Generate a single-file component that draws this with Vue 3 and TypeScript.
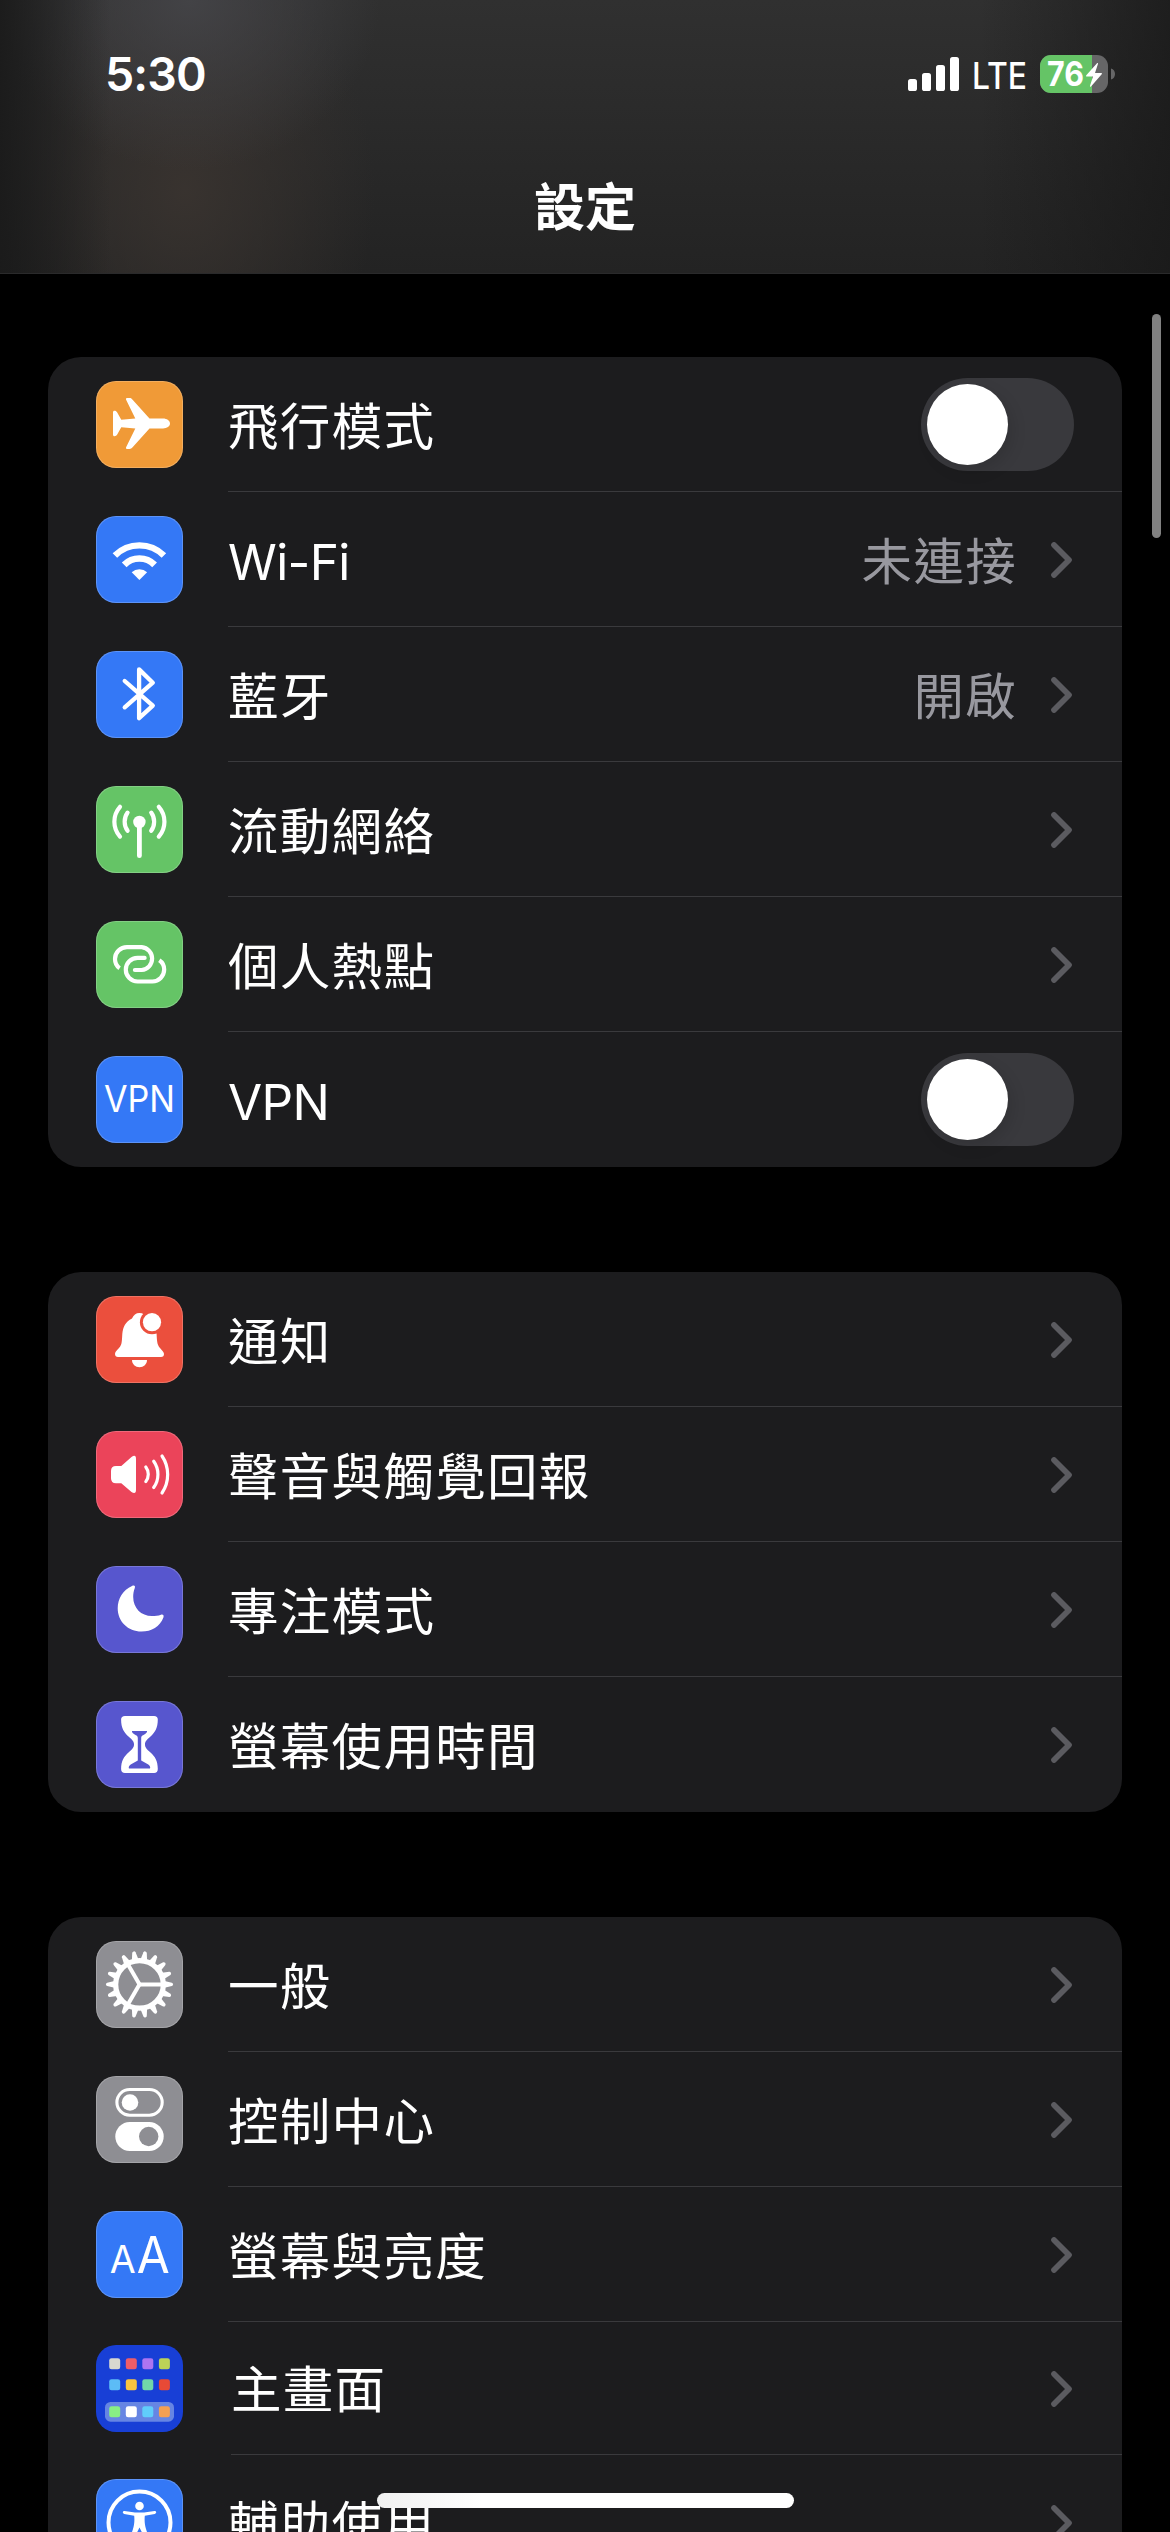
<script setup lang="ts">
type IconName =
  | 'airplane' | 'wifi' | 'bluetooth' | 'cellular' | 'hotspot' | 'vpn'
  | 'bell' | 'speaker' | 'moon' | 'hourglass'
  | 'gear' | 'controls' | 'display' | 'home' | 'accessibility'

interface Row {
  label: string
  icon: IconName
  color: string
  value?: string
  toggle?: boolean
}

const groups: Row[][] = [
  [
    { label: '飛行模式', icon: 'airplane', color: '#f09a37', toggle: true },
    { label: 'Wi-Fi', icon: 'wifi', color: '#3478f6', value: '未連接' },
    { label: '藍牙', icon: 'bluetooth', color: '#3478f6', value: '開啟' },
    { label: '流動網絡', icon: 'cellular', color: '#65c466' },
    { label: '個人熱點', icon: 'hotspot', color: '#65c466' },
    { label: 'VPN', icon: 'vpn', color: '#3478f6', toggle: true },
  ],
  [
    { label: '通知', icon: 'bell', color: '#eb4f3d' },
    { label: '聲音與觸覺回報', icon: 'speaker', color: '#eb445a' },
    { label: '專注模式', icon: 'moon', color: '#5756ce' },
    { label: '螢幕使用時間', icon: 'hourglass', color: '#5756ce' },
  ],
  [
    { label: '一般', icon: 'gear', color: '#8e8e93' },
    { label: '控制中心', icon: 'controls', color: '#8e8e93' },
    { label: '螢幕與亮度', icon: 'display', color: '#3478f6' },
    { label: '主畫面', icon: 'home', color: '#183fd6' },
    { label: '輔助使用', icon: 'accessibility', color: '#3478f6' },
  ],
]

const teeth = Array.from({ length: 18 }, (_, i) => i * 20)

const columns = [13.2, 29.8, 46.3, 62.9]
const homeRows = [
  { y: 13.3, colors: ['#d8d8d0', '#ee5d68', '#ad74f2', '#bcd357'] },
  { y: 34.3, colors: ['#5cbcf6', '#f9c440', '#70d8a9', '#e84a36'] },
  { y: 61.3, colors: ['#88ef84', '#ffffff', '#60cdfb', '#f4a052'] },
]
</script>

<template>
  <div class="screen">
    <header class="header">
      <div class="status">
        <span class="time">5:30</span>
        <div class="indicators">
          <svg class="signal" viewBox="0 0 51 34">
            <rect x="0" y="22" width="9" height="12" rx="2.6" />
            <rect x="14" y="16" width="9" height="18" rx="2.6" />
            <rect x="28" y="8" width="9" height="26" rx="2.6" />
            <rect x="42" y="0" width="9" height="34" rx="2.6" />
          </svg>
          <svg class="carrier" viewBox="0 0 56 38">
            <text x="0" y="34" textLength="55" lengthAdjust="spacingAndGlyphs">LTE</text>
          </svg>
          <svg class="battery" viewBox="0 0 76 38">
            <clipPath id="battery-shape"><rect width="68" height="38" rx="11" /></clipPath>
            <g clip-path="url(#battery-shape)">
              <rect width="68" height="38" fill="#666667" />
              <rect width="52" height="38" fill="#65c466" />
            </g>
            <path d="M71 13.5c2.7.9 4 2.9 4 5.5s-1.300 4.600-4 5.500z" fill="#666667" />
            <text x="7" y="31" class="charge" textLength="37" lengthAdjust="spacingAndGlyphs">76</text>
            <path d="M57 8.200 46.300 20.200c-.5.700-.2 1.300.5 1.300h6.200l-3 9.300c-.3 1 .4 1.300 1 .6L61.700 19.300c.5-.7.200-1.300-.5-1.300H55l3-9.200c.2-.9-.4-1.200-1-.6z" fill="#fff" />
          </svg>
        </div>
      </div>
      <h1 class="title">設定</h1>
    </header>

    <main class="content">
      <section v-for="(group, g) in groups" :key="g" class="card">
        <div v-for="row in group" :key="row.label" class="row" :class="{ compact: row.icon === 'home' }">
          <div class="tile" :style="{ backgroundColor: row.color }" :class="{ plain: row.icon === 'home' }">
            <svg viewBox="0 0 87 87" fill="#fff">
              <path
                v-if="row.icon === 'airplane'"
                d="M67 37.600C71 37.600 74 39.800 74 42.500C74 45.200 71 47.400 67 47.400H53.500L36.600 66.300C35.500 67.600 34.800 68 33.500 68H31C30 68 29.700 67.200 30.100 66.300L39.300 47.600L25.300 46.300L21.200 53.600C20.500 54.800 19.700 55.300 18.500 55.300C17.500 55.300 17 54.700 17 53.800V31.300C17 30.300 17.500 29.700 18.500 29.700C19.700 29.700 20.500 30.200 21.200 31.400L25.300 38.800L39.300 37.400L30.100 18.700C29.700 17.800 30 17 31 17H33.500C34.800 17 35.500 17.400 36.600 18.700L53.500 37.600Z"
              />
              <g v-else-if="row.icon === 'wifi'" fill="none" stroke="#fff">
                <path d="M18.900 39.500A34.650 34.650 0 0 1 67.900 39.500" stroke-width="6.400" />
                <path d="M28.200 48.800A21.500 21.500 0 0 1 58.600 48.800" stroke-width="6.700" />
                <path d="M43.400 64L35.700 56.300A11.200 11.200 0 0 1 51.100 56.300Z" fill="#fff" stroke="none" />
              </g>
              <path
                v-else-if="row.icon === 'bluetooth'"
                d="M28.700 30L56.800 54.700L43.100 67.200V18.400L56.800 31.700L28.700 56.300"
                fill="none" stroke="#fff" stroke-width="4.300" stroke-linecap="round" stroke-linejoin="round"
              />
              <g v-else-if="row.icon === 'cellular'" fill="none" stroke="#fff" stroke-width="4.200" stroke-linecap="round">
                <circle cx="43.400" cy="36" r="6.200" fill="#fff" stroke="none" />
                <path d="M43.400 38V69.700" stroke-width="4.800" />
                <path d="M31.600 26.600A15.500 15.500 0 0 0 31.600 44.800M55.200 26.600A15.500 15.500 0 0 1 55.200 44.800" />
                <path d="M24 20.800A22.500 22.500 0 0 0 24 50.600M62.800 20.800A22.500 22.500 0 0 1 62.800 50.600" />
              </g>
              <g v-else-if="row.icon === 'hotspot'" fill="none" stroke="#fff" stroke-width="4.200">
                <path d="M23.600 47.200C20.700 45.200 19 41.800 19 38A12 12 0 0 1 31 26.100H45.700A11.500 11.500 0 0 1 45.700 49H39" />
                <path d="M48.200 36.900H41.600A11.800 11.800 0 0 0 41.600 60.500H56.400A12 12 0 0 0 68.200 48.600C68.200 44.800 66.400 41.300 63.300 39.300" />
                <path d="M39 49H38.900M48.500 36.900H48.600" stroke-linecap="round" />
              </g>
              <text v-else-if="row.icon === 'vpn'" x="8" y="55.700" class="vpn" textLength="71" lengthAdjust="spacingAndGlyphs">VPN</text>
              <g v-else-if="row.icon === 'bell'">
                <path d="M43.400 17C40 17 37.500 19 36 22.500C29.500 25.500 27 31 26.300 38C25.800 45 26.200 48.500 23 52C20 55 19 56.500 19 58C19 60 20.200 61 22 61H65C67 61 68 60 68 58C68 56.500 66.500 55 64 52C61 48.500 61 45 60.600 38C60 30.500 57.500 25 51 22.500C49.500 19 47 17 43.400 17Z" />
                <path d="M36 64H51C51 68.200 47.600 71.200 43.500 71.200S36 68.200 36 64Z" />
                <circle cx="56" cy="26.200" r="12.100" :fill="row.color" />
                <circle cx="56" cy="26.200" r="9.100" />
              </g>
              <g v-else-if="row.icon === 'speaker'">
                <path d="M20 35H25.300L35.500 26Q40 22.900 40 28V58.700Q40 63.700 35.500 61L25.300 52.200H20Q15 52.200 15 47.200V40Q15 35 20 35Z" />
                <path
                  d="M49.800 36A12 12 0 0 1 49.800 50.600M57.700 30.300A22.400 22.400 0 0 1 57.700 56.500M66 25A33 33 0 0 1 66 62"
                  fill="none" stroke="#fff" stroke-width="3.200" stroke-linecap="round"
                />
              </g>
              <path
                v-else-if="row.icon === 'moon'"
                d="M36 20C38 19 39.600 19.700 38.800 22C37.600 25 37.200 28 37.200 31C37.200 42 45 50 56 50C59.500 50 62 49.700 65 48.700C67 48 68.200 49.500 67.400 51.500C64 60.500 55.500 65.600 45.500 65.600C32 65.600 21.700 55.500 21.700 42.300C21.700 32.500 27 24 36 20Z"
              />
              <g v-else-if="row.icon === 'hourglass'">
                <path d="M29 15H58C60.500 15 61.800 16.200 61.800 18.500C61.800 27 59 31.500 54.500 35.500C50.500 39 49 40.500 49 43.300C49 46.500 50.500 48 54.500 51.500C59 55.500 61.800 60 61.800 68C61.800 70.500 60.500 72 58 72H29C26.500 72 25.100 70.500 25.100 68C25.100 60 28 55.500 32.500 51.500C36.500 48 38 46.500 38 43.300C38 40.500 36.500 39 32.500 35.500C28 31.500 25.100 27 25.100 18.500C25.100 16.200 26.500 15 29 15Z" />
                <path d="M36 30H51C51.300 31 50.500 31.800 49.700 32.500C47 34.500 45.200 34.500 45.200 37V59.500L52.300 63.500C54 64.600 54.600 66.500 54 67.600H33C32.300 66.500 33 64.600 34.700 63.500L41.800 59.500V37C41.800 34.500 40 34.500 37.300 32.500C36.500 31.800 35.700 31 36 30Z" :fill="row.color" />
              </g>
              <g v-else-if="row.icon === 'gear'" transform="translate(43.5 43.4)">
                <circle r="23.800" fill="none" stroke="#fff" stroke-width="5.200" />
                <path v-for="a in teeth" :key="a" :transform="`rotate(${a})`" d="M25 -3.300L32.300 -1.700Q33.500 -1.300 33.500 0T32.300 1.700L25 3.300Z" />
                <path v-for="a in [0, 120, 240]" :key="'s' + a" :transform="`rotate(${a})`" d="M-1 -2H23V2H-1Z" />
              </g>
              <g v-else-if="row.icon === 'controls'">
                <rect x="20.900" y="13.500" width="45.300" height="25.700" rx="12.850" fill="none" stroke="#fff" stroke-width="3.100" />
                <circle cx="34" cy="26.500" r="8.300" />
                <rect x="19.300" y="46" width="48.400" height="29" rx="14.500" />
                <circle cx="52.700" cy="60.500" r="9.700" :fill="row.color" />
              </g>
              <g v-else-if="row.icon === 'display'" class="letters">
                <text x="26.800" y="62.200" font-size="38" textLength="26" lengthAdjust="spacingAndGlyphs">A</text>
                <text x="57.300" y="62.200" font-size="51" textLength="33" lengthAdjust="spacingAndGlyphs">A</text>
              </g>
              <g v-else-if="row.icon === 'home'">
                <rect x="9" y="57" width="69" height="19.700" rx="5.500" fill="#6685e3" />
                <template v-for="line in homeRows" :key="line.y">
                  <rect v-for="(c, i) in line.colors" :key="i" :x="columns[i]" :y="line.y" width="11" height="11" rx="2.300" :fill="c" />
                </template>
              </g>
              <g v-else>
                <circle cx="43.500" cy="43.500" r="31" fill="none" stroke="#fff" stroke-width="4" />
                <circle cx="43.500" cy="27" r="4.300" />
                <path d="M28.500 31.900L39 33.500H48L58.500 31.900C60.600 31.700 60.800 34.500 58.800 34.900L48.800 36.700C48.300 42 48.800 46 50 50L54 62C54.500 64.500 51.800 65.300 50.800 63L43.500 48.500L36.200 63C35.200 65.300 32.500 64.500 33 62L37 50C38.200 46 38.700 42 38.200 36.700L28.200 34.900C26.200 34.500 26.400 31.700 28.500 31.900Z" />
              </g>
            </svg>
          </div>
          <div class="body">
            <span class="label" :class="{ latin: /^[A-Z]/.test(row.label) }">{{ row.label }}</span>
            <span v-if="row.value" class="value">{{ row.value }}</span>
            <span v-if="row.toggle" class="toggle"><span class="knob"></span></span>
            <svg v-else class="chevron" viewBox="0 0 21 36">
              <path d="M3 3L18 18L3 33" />
            </svg>
          </div>
        </div>
      </section>
    </main>

    <div class="scrollbar"></div>
    <div class="home-indicator"></div>
  </div>
</template>

<style>
html,
body {
  background: #000;
}
</style>

<style scoped>
.screen {
  position: relative;
  width: 1170px;
  height: 2532px;
  overflow: hidden;
  background: #000;
  color: #fff;
  font-family: Inter, "Noto Sans CJK TC", sans-serif;
}

.header {
  box-sizing: border-box;
  height: 274px;
  border-bottom: 1px solid #2a2a2b;
  background:
    linear-gradient(90deg, rgba(26, 26, 26, 0.9) 0, rgba(26, 26, 26, 0) 110px),
    linear-gradient(270deg, rgba(24, 24, 24, 0.75) 0, rgba(24, 24, 24, 0) 190px),
    radial-gradient(ellipse 190px 170px at 190px 0, rgba(70, 70, 74, 0.85), rgba(70, 70, 74, 0)),
    radial-gradient(ellipse 190px 240px at 185px 190px, rgba(58, 52, 48, 0.9), rgba(58, 52, 48, 0)),
    linear-gradient(180deg, #303030, #232323);
}

.status {
  display: flex;
  justify-content: space-between;
  align-items: center;
  height: 148px;
  padding: 0 54px 0 105px;
}

.time {
  font-size: 46.500px;
  font-weight: 600;
  letter-spacing: -0.9px;
}

.indicators {
  display: flex;
  align-items: center;
}

.signal {
  width: 51px;
  height: 34px;
  fill: #fff;
}

.carrier {
  width: 56px;
  height: 38px;
  margin: 0 12px 0 13px;
  overflow: visible;
  fill: #fff;
  font-size: 36.500px;
  font-weight: 500;
}

.battery {
  width: 76px;
  height: 38px;
}

.charge {
  fill: #fff;
  font-size: 33.500px;
  font-weight: 700;
}

.title {
  margin: 0;
  padding-top: 22px;
  font-size: 51px;
  line-height: 76px;
  font-weight: 700;
  text-align: center;
}

.content {
  display: flex;
  flex-direction: column;
  gap: 105px;
  padding: 83px 48px 0;
}

.card {
  border-radius: 33px;
  overflow: hidden;
  background: #1c1c1e;
}

.row {
  display: flex;
  align-items: center;
  height: 135px;
  padding-left: 48px;
}

.row.compact {
  height: 133px;
}

.tile {
  flex: none;
  width: 87px;
  height: 87px;
  border-radius: 20px;
  box-shadow: inset 0 0 0 1px rgba(255, 255, 255, 0.2);
}

.tile.plain {
  box-shadow: none;
}

.tile svg {
  display: block;
  width: 87px;
  height: 87px;
}

.vpn {
  font-size: 36.500px;
}

.letters {
  text-anchor: middle;
}

.body {
  flex: 1;
  display: flex;
  align-items: center;
  align-self: stretch;
  margin-left: 45px;
  padding-right: 48px;
  box-shadow: inset 0 -1px #3a3a3d;
}

.row.compact .body {
  margin-left: 48px;
}

.row:last-child .body {
  box-shadow: none;
}

.label,
.value {
  padding-top: 5px;
  font-size: 50.500px;
  line-height: 74px;
  letter-spacing: 1.300px;
  white-space: nowrap;
}

.label {
  flex: 1;
}

.row.compact .label {
  padding-top: 2px;
}

.label.latin {
  padding-top: 4px;
  font-size: 49.500px;
  letter-spacing: -0.6px;
}

.value {
  margin-right: 34px;
  color: #98989f;
}

.toggle {
  box-sizing: border-box;
  width: 153px;
  height: 93px;
  padding: 6px;
  border-radius: 47px;
  background: #39393d;
}

.knob {
  display: block;
  width: 81px;
  height: 81px;
  border-radius: 50%;
  background: #fff;
  box-shadow: 4px 6px 16px rgba(0, 0, 0, 0.12);
}

.chevron {
  width: 21px;
  height: 36px;
  margin-right: 2px;
  fill: none;
  stroke: #5b5b60;
  stroke-width: 5.700;
  stroke-linecap: round;
  stroke-linejoin: round;
}

.scrollbar {
  position: absolute;
  top: 314px;
  left: 1152px;
  width: 9px;
  height: 224px;
  border-radius: 5px;
  background: #818181;
}

.home-indicator {
  position: absolute;
  left: 377px;
  top: 2493px;
  width: 417px;
  height: 15px;
  border-radius: 8px;
  background: linear-gradient(90deg, #f0f0f0, #fff 25%);
}
</style>
